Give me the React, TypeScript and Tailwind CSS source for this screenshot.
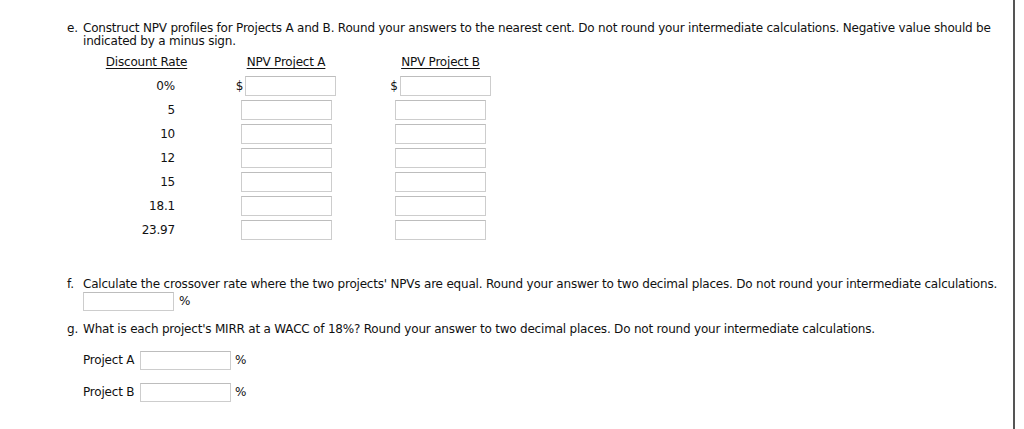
import React from "react";

const font = { fontFamily: '"DejaVu Sans", Verdana, sans-serif' };

function Box({ w = "w-[91px]", h = "h-[20px]" }: { w?: string; h?: string }) {
  return <div className={`${w} ${h} border border-[#cdcdcd] border-t-[#bdbdbd] bg-white`} />;
}

const rates = ["0%", "5", "10", "12", "15", "18.1", "23.97"];

export default function App() {
  return (
    <div
      className="w-[1024px] h-[429px] bg-white flex text-[#111111] text-[12px] leading-[13px] tracking-[-0.2px]"
      style={font}
    >
      <div className="w-[1013px] pl-[67px] pt-[22px]">
        {/* e */}
        <div className="flex">
          <div className="w-[16px]">e.</div>
          <div className="flex-1">
            <p>
              Construct NPV profiles for Projects A and B. Round your answers to the nearest cent. Do not round your
              intermediate calculations. Negative value should be indicated by a minus sign.
            </p>
            <div className="mt-[8px] flex flex-col">
              <div className="flex h-[14px]">
                <div className="w-[127px] text-center"><span className="underline underline-offset-[2px]">Discount Rate</span></div>
                <div className="w-[152px] text-center"><span className="underline underline-offset-[2px]">NPV Project A</span></div>
                <div className="w-[157px] text-center"><span className="underline underline-offset-[2px]">NPV Project B</span></div>
              </div>
              <div className="mt-[6px] flex flex-col gap-[4px]">
                {rates.map((r, i) => (
                  <div key={r} className="flex h-[20px] items-center">
                    <div className="w-[127px] text-right pr-[35px]">{r}</div>
                    <div className="w-[152px] flex justify-center items-center gap-[2px]">
                      {i === 0 && <span>$</span>}
                      <Box />
                    </div>
                    <div className="w-[157px] flex justify-center items-center gap-[2px]">
                      {i === 0 && <span>$</span>}
                      <Box />
                    </div>
                  </div>
                ))}
              </div>
            </div>
          </div>
        </div>

        {/* f */}
        <div className="flex mt-[38px]">
          <div className="w-[16px]">f.</div>
          <div className="flex-1">
            <p>
              Calculate the crossover rate where the two projects' NPVs are equal. Round your answer to two decimal
              places. Do not round your intermediate calculations.
            </p>
            <div className="flex items-center gap-[5px] mt-[1px]">
              <Box h="h-[19px]" />
              <span>%</span>
            </div>
          </div>
        </div>

        {/* g */}
        <div className="flex mt-[12px]">
          <div className="w-[16px]">g.</div>
          <div className="flex-1">
            <p>
              What is each project's MIRR at a WACC of 18%? Round your answer to two decimal places. Do not round your
              intermediate calculations.
            </p>
            <div className="flex flex-col gap-[13px] mt-[15px]">
              <div className="flex items-center">
                <span className="w-[57px]">Project A</span>
                <Box h="h-[19px]" />
                <span className="ml-[4px]">%</span>
              </div>
              <div className="flex items-center">
                <span className="w-[57px]">Project B</span>
                <Box h="h-[19px]" />
                <span className="ml-[4px]">%</span>
              </div>
            </div>
          </div>
        </div>
      </div>
      <div className="w-[2px] h-full bg-[#555555]" />
      <div className="w-[9px]" />
    </div>
  );
}
